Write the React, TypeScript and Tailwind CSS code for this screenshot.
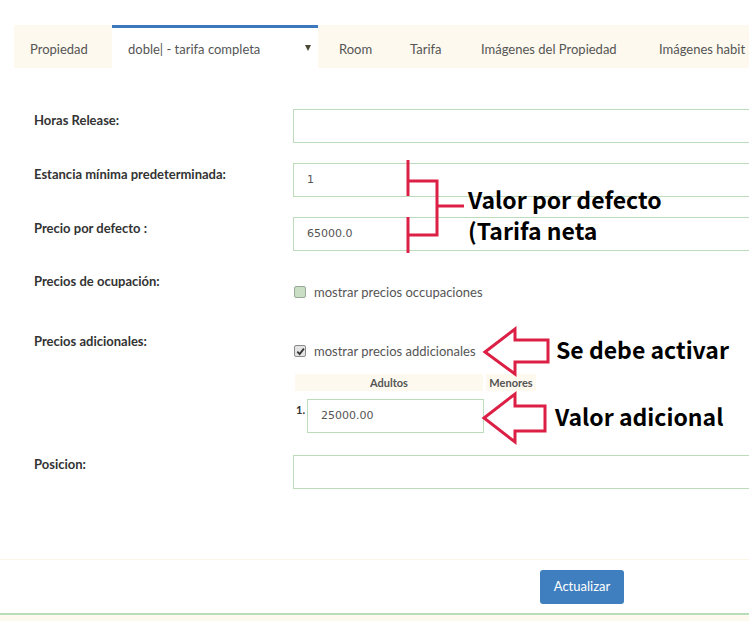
import React from 'react';

const cream = 'bg-[#fdf9ee]';

function Tab({ label, width, pl = 'pl-[18px]' }: { label: string; width: string; pl?: string }) {
  return (
    <div className={`${width} ${pl} h-full pt-[15px] leading-[18px] text-[13px] text-[#555] whitespace-nowrap overflow-hidden`}>
      {label}
    </div>
  );
}

function TextInput({ value = '', width = 'w-[480px]' }: { value?: string; width?: string }) {
  return (
    <div
      className={`${width} shrink-0 h-[34px] border border-[#bcdcbc] bg-white pl-[13px] flex items-center text-[11px] text-[#555]`}
      style={{ fontFamily: '"DejaVu Sans", Verdana, sans-serif' }}
    >
      {value}
    </div>
  );
}

function Label({ children, pt = 'pt-[2px]' }: { children: React.ReactNode; pt?: string }) {
  return (
    <div className={`w-[293px] shrink-0 pl-[34px] ${pt} leading-[18px] text-[13px] font-bold text-[#333]`}>
      {children}
    </div>
  );
}

function Checkbox({ checked }: { checked?: boolean }) {
  return (
    <span
      className={`inline-flex w-[12px] h-[12px] rounded-[2px] border items-center justify-center ${
        checked ? 'border-[#8a8a8a] bg-[#e4e4e4]' : 'border-[#9aa89a] bg-[#c9dec4]'
      }`}
    >
      {checked && (
        <svg width="9" height="9" viewBox="0 0 10 10">
          <path d="M1.5 5.2 L4 7.8 L8.8 1.8" fill="none" stroke="#333" strokeWidth="2" />
        </svg>
      )}
    </span>
  );
}

const noteFont = { fontFamily: '"Noto Sans CJK KR", "Noto Sans", sans-serif' };

export default function App() {
  return (
    <div
      className="relative w-[749px] h-[621px] overflow-hidden bg-white"
      style={{ fontFamily: 'Lato, "Open Sans", sans-serif' }}
    >
      {/* tabs */}
      <div className="pt-[25px] pl-[14px]">
        <div className={`flex h-[43px] w-[735px] overflow-hidden ${cream}`}>
          <Tab label="Propiedad" width="w-[98px] shrink-0" pl="pl-[16px]" />
          <div className="relative w-[206px] shrink-0 h-full bg-white border-t-[3px] border-[#3b78be] pl-[16px] pt-[12px] leading-[18px] text-[13px] text-[#555] whitespace-nowrap">
            doble| - tarifa completa
            <svg className="absolute right-[7px] top-[17px]" width="6" height="6" viewBox="0 0 6 6">
              <path d="M0 0 H6 L3 6 Z" fill="#4a4a34" />
            </svg>
          </div>
          <Tab label="Room" width="w-[74px] shrink-0" pl="pl-[21px]" />
          <Tab label="Tarifa" width="w-[70px] shrink-0" />
          <Tab label="Imágenes del Propiedad" width="w-[178px] shrink-0" pl="pl-[19px]" />
          <Tab label="Imágenes habit" width="w-[109px] shrink-0" pl="pl-[19px]" />
        </div>
      </div>

      {/* form */}
      <div className="mt-[41px]">
        <div className="flex">
          <Label>Horas Release:</Label>
          <TextInput />
        </div>
        <div className="flex mt-[20px]">
          <Label>Estancia mínima predeterminada:</Label>
          <TextInput value="1" />
        </div>
        <div className="flex mt-[20px]">
          <Label>Precio por defecto :</Label>
          <TextInput value="65000.0" />
        </div>
        <div className="flex mt-[19px]">
          <Label>Precios de ocupación:</Label>
          <div className="mt-[13px] flex items-center gap-[8px] pl-[1px] leading-[18px] text-[13px] text-[#555]">
            <Checkbox />
            <span>mostrar precios occupaciones</span>
          </div>
        </div>
        <div className="flex mt-[29px]">
          <Label>Precios adicionales:</Label>
          <div>
            <div className="mt-[12px] flex items-center gap-[8px] pl-[1px] leading-[18px] text-[13px] text-[#555]">
              <Checkbox checked />
              <span>mostrar precios addicionales</span>
            </div>
            <div className="mt-[14px] ml-[2px] flex gap-[3px] text-[11px] font-bold text-[#555] leading-[17px]">
              <div className={`w-[188px] h-[17px] text-center ${cream}`}>Adultos</div>
              <div className={`w-[50px] h-[17px] text-center ${cream}`}>Menores</div>
            </div>
            <div className="mt-[8px] ml-[3px] flex">
              <div className="w-[11px] pt-[4px] text-[11px] font-bold text-[#333] leading-[14px]">1.</div>
              <TextInput value="25000.00" width="w-[177px]" />
            </div>
          </div>
        </div>
        <div className="flex mt-[22px]">
          <Label pt="pt-0">Posicion:</Label>
          <TextInput />
        </div>
      </div>

      {/* footer */}
      <div className="mt-[70px] border-t border-[#fbf6e8]">
        <div className="pt-[10px] pl-[540px]">
          <button className="w-[84px] h-[34px] rounded-[3px] bg-[#3f7fc0] text-white text-[13px]">
            Actualizar
          </button>
        </div>
        <div className={`mt-[9px] h-[20px] border-t-2 border-[#b9dcb9] ${cream}`} />
      </div>

      {/* annotations */}
      <svg className="absolute inset-0 pointer-events-none" width="749" height="621" viewBox="0 0 749 621">
        <g fill="none" stroke="#dc1f45" strokeWidth="3">
          <path d="M408 160 V196" />
          <path d="M408 217 V253" />
          <path d="M408 181 H437 V235 H408" />
          <path d="M437 206 H464" />
          <path d="M485 352 L515 329 V340 H548 V362 H515 V374 Z" strokeLinejoin="miter" />
          <path d="M484 418 L515 394 V406 H545 V431 H515 V442 Z" strokeLinejoin="miter" />
        </g>
      </svg>
      <div className="absolute left-[468px] top-[184px] text-[23px] font-bold leading-[30px] text-black whitespace-nowrap" style={noteFont}>
        Valor por defecto
      </div>
      <div className="absolute left-[468px] top-[215px] text-[23px] font-bold leading-[30px] text-black whitespace-nowrap" style={noteFont}>
        (Tarifa neta
      </div>
      <div className="absolute left-[556px] top-[334px] text-[23px] font-bold leading-[30px] text-black whitespace-nowrap" style={noteFont}>
        Se debe activar
      </div>
      <div className="absolute left-[555px] top-[401px] text-[23px] font-bold leading-[30px] text-black whitespace-nowrap" style={noteFont}>
        Valor adicional
      </div>
    </div>
  );
}
